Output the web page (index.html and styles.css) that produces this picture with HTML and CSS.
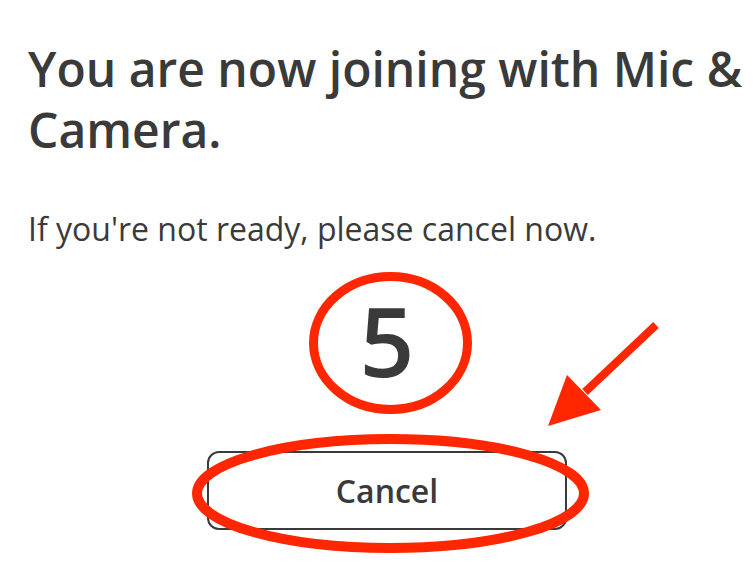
FILE: index.html
```html
<!DOCTYPE html>
<html lang="en">
<head>
    <meta charset="UTF-8">
    <meta name="viewport" content="width=device-width, initial-scale=1.0">
    <title>Joining</title>
    <link rel="stylesheet" href="styles.css">
</head>
<body>
    <div class="page">
        <h1 class="title">You are now joining with Mic &amp; Camera.</h1>
        <p class="note">If you're not ready, please cancel now.</p>

        <div class="countdown">5</div>

        <div class="actions">
            <button class="button">Cancel</button>
        </div>

        <!-- red markup drawn over the screenshot -->
        <svg class="marks" width="753" height="564" viewBox="0 0 753 564">
            <ellipse cx="390.5" cy="343" rx="77" ry="66.5" fill="none" stroke="#ff2600" stroke-width="9"/>
            <ellipse cx="390.5" cy="493.5" rx="193.5" ry="54.5" fill="none" stroke="#ff2600" stroke-width="10"/>
            <line x1="656" y1="325" x2="585" y2="392" stroke="#ff2600" stroke-width="8"/>
            <polygon points="548,426 567,375 601,410" fill="#ff2600"/>
        </svg>
    </div>
</body>
</html>
```

FILE: styles.css
```css
body {
    margin: 0;
    background-color: #fff;
    font-family: "Open Sans", sans-serif;
    color: #3a3a3a;
}
.page {
    position: relative;
    width: 718px;
    height: 564px;
    padding-left: 28px;
    overflow: hidden;
}
.title {
    margin: 0;
    padding-top: 38px;
    font-size: 48px;
    font-weight: 600;
    line-height: 61px;
}
.note {
    margin: 0;
    padding-top: 49px;
    font-size: 32px;
    line-height: 40px;
}
.countdown {
    margin-top: 41px;
    text-align: center;
    font-size: 96px;
    font-weight: 600;
    line-height: 100px;
}
.actions {
    display: flex;
    justify-content: center;
    margin-top: 61px;
}
.button {
    width: 360px;
    height: 79px;
    border: 2px solid #3a3a3a;
    border-radius: 12px;
    background-color: #fff;
    font-family: "Open Sans", sans-serif;
    font-size: 32px;
    font-weight: 600;
    color: #3a3a3a;
}
.marks {
    position: absolute;
    top: 0;
    left: 0;
    pointer-events: none;
}
```
